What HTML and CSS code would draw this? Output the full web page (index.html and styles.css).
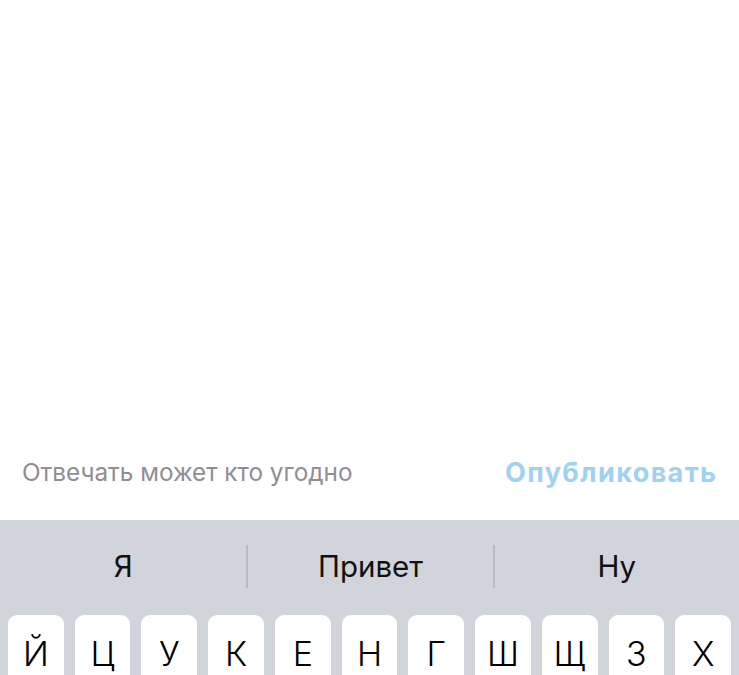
FILE: index.html
```html
<!DOCTYPE html>
<html lang="ru">
<head>
<meta charset="utf-8">
<title>Ответ</title>
<link rel="stylesheet" href="styles.css">
</head>
<body>
<div class="screen">
  <div class="compose"></div>
  <div class="footer">
    <span class="reply-setting">Отвечать может кто угодно</span>
    <span class="publish">Опубликовать</span>
  </div>
  <div class="keyboard">
    <div class="suggestions">
      <div class="suggestion">Я</div>
      <div class="suggestion">Привет</div>
      <div class="suggestion">Ну</div>
    </div>
    <div class="key-row">
      <div class="key">Й</div>
      <div class="key">Ц</div>
      <div class="key">У</div>
      <div class="key">К</div>
      <div class="key">Е</div>
      <div class="key">Н</div>
      <div class="key">Г</div>
      <div class="key">Ш</div>
      <div class="key">Щ</div>
      <div class="key">З</div>
      <div class="key">Х</div>
    </div>
  </div>
</div>
</body>
</html>
```
FILE: styles.css
```css
html, body {
  margin: 0;
  padding: 0;
  background: #ffffff;
}
body {
  font-family: Inter, "Liberation Sans", Arial, sans-serif;
  overflow: hidden;
}
.screen {
  display: flex;
  flex-direction: column;
  height: 675px;
  overflow: hidden;
}
.compose {
  flex: 1;
}
.footer {
  height: 80px;
  box-sizing: border-box;
  padding: 0 23px 16px 22px;
  display: flex;
  justify-content: space-between;
  align-items: center;
}
.reply-setting {
  font-size: 24.3px;
  color: #8e8e93;
}
.publish {
  font-size: 27px;
  font-weight: 700;
  letter-spacing: 1.4px;
  margin-right: -1.4px;
  color: #9fd1f1;
}
.keyboard {
  height: 155px;
  background: #d1d4da;
  overflow: hidden;
}
.suggestions {
  height: 92px;
  display: grid;
  grid-template-columns: 1fr 1fr 1fr;
  align-items: center;
}
.suggestion {
  text-align: center;
  font-size: 29.5px;
  color: #111111;
  line-height: 43px;
}
.suggestion + .suggestion {
  border-left: 2px solid #b8bbc2;
}
.key-row {
  display: grid;
  grid-template-columns: repeat(11, 1fr);
  gap: 11px;
  padding: 3px 8px 0;
}
.key {
  height: 90px;
  background: #ffffff;
  border-radius: 9px;
  box-sizing: border-box;
  padding-top: 22px;
  text-align: center;
  font-size: 34px;
  font-weight: 300;
  line-height: 34px;
  color: #000000;
}
```
